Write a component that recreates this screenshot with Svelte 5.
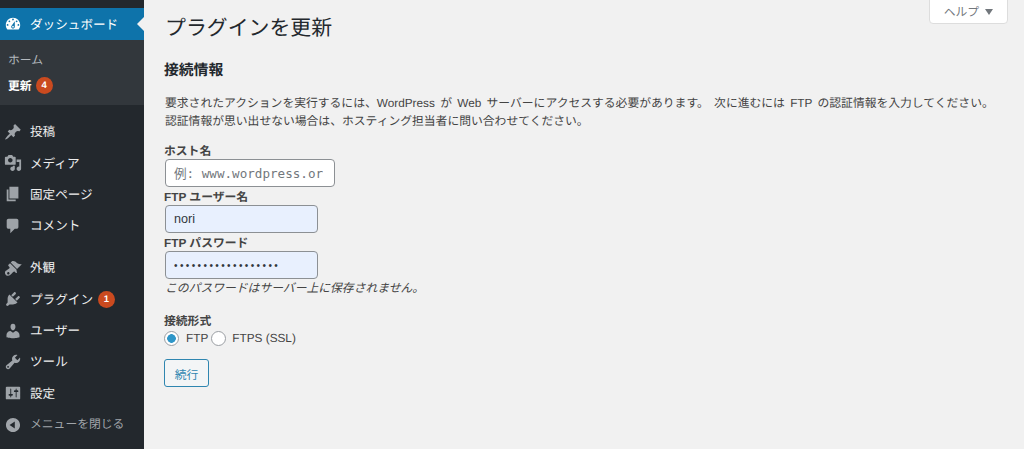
<script>
  const icons = {
    dashboard: 'M3.76 16h12.48c1.1-1.37 1.76-3.11 1.76-5 0-4.42-3.58-8-8-8s-8 3.58-8 8c0 1.89.66 3.63 1.76 5zM10 4c.55 0 1 .45 1 1s-.45 1-1 1-1-.45-1-1 .45-1 1-1zM6 6c.55 0 1 .45 1 1s-.45 1-1 1-1-.45-1-1 .45-1 1-1zm8 0c.55 0 1 .45 1 1s-.45 1-1 1-1-.45-1-1 .45-1 1-1zm-5.37 5.55L12 7v6c0 1.1-.9 2-2 2s-2-.9-2-2c0-.57.24-1.08.63-1.45zM4 10c.55 0 1 .45 1 1s-.45 1-1 1-1-.45-1-1 .45-1 1-1zm12 0c.55 0 1 .45 1 1s-.45 1-1 1-1-.45-1-1 .45-1 1-1zm-5 3c0-.55-.45-1-1-1s-1 .45-1 1 .45 1 1 1 1-.45 1-1z',
    pin: 'M10.44 3.02l1.82-1.82 6.36 6.35-1.83 1.82c-1.05-.68-2.48-.57-3.41.36l-.75.75c-.92.93-1.04 2.35-.35 3.41l-1.83 1.82-2.41-2.41-2.8 2.79c-.42.42-3.38 2.71-3.8 2.29s1.86-3.39 2.28-3.81l2.79-2.79L4.1 9.36l1.83-1.82c1.05.69 2.48.57 3.4-.36l.75-.75c.93-.92 1.05-2.35.36-3.41z',
    media: 'M13 11V4c0-.55-.45-1-1-1h-1.67L9 1H5L3.67 3H2c-.55 0-1 .45-1 1v7c0 .55.45 1 1 1h10c.55 0 1-.45 1-1zM7 4.5c1.38 0 2.5 1.12 2.5 2.5S8.38 9.5 7 9.5 4.5 8.38 4.5 7 5.62 4.5 7 4.5zM14 6h5v10.5c0 1.38-1.12 2.5-2.5 2.5S14 17.88 14 16.5s1.12-2.5 2.5-2.5c.17 0 .34.02.5.05V9h-3V6zm-4 8.05V13h2v3.5c0 1.38-1.12 2.5-2.5 2.5S7 17.88 7 16.5 8.12 14 9.5 14c.17 0 .34.02.5.05z',
    page: 'M6 15V2h10v13H6zm-1 1h8v2H3V5h2v11z',
    comment: 'M5 2h9c1.1 0 2 .9 2 2v7c0 1.1-.9 2-2 2h-2l-5 5v-5H5c-1.1 0-2-.9-2-2V4c0-1.1.9-2 2-2z',
    brush: 'M14.48 11.06L7.41 3.99l1.5-1.5c.5-.56 2.3-.47 3.51.32 1.21.8 1.43 1.28 2.91 2.1 1.18.64 2.45 1.26 4.45.85zm-.71.71L6.7 4.7 4.93 6.47c-.39.39-.39 1.02 0 1.41l1.06 1.06c.39.39.39 1.03 0 1.42-.6.6-1.43 1.11-2.21 1.69-.35.26-.7.53-1.01.84C1.43 13.23.99 14.3 1.1 15.6c.11 1.29 1.15 2.77 2.64 3.08 1.16.24 2.31-.26 3.08-.83.69-.52 1.2-1.13 1.84-1.77.46-.46.99-1.03 1.55-1.53.56-.49 1.12-.99 1.72-.39l1.06 1.06c.39.39 1.02.39 1.41 0zM5.79 16.91c-.54.54-1.42.54-1.96 0-.54-.54-.54-1.42 0-1.96.54-.54 1.42-.54 1.96 0 .54.54.54 1.42 0 1.96z',
    plugin: 'M13.11 4.36L9.87 7.6 8 5.73l3.24-3.24c.35-.34 1.05-.2 1.56.32.52.51.66 1.21.31 1.55zm-8 1.77l.91-1.12 9.01 9.01-1.19.84c-.71.71-2.63 1.16-3.82 1.16H6.14L4.9 17.26c-.59.59-1.54.59-2.12 0-.59-.58-.59-1.53 0-2.12l1.24-1.24v-3.88c0-1.13.4-3.19 1.09-3.89zm7.26 3.97l3.24-3.24c.34-.35 1.04-.21 1.55.31.52.51.66 1.21.31 1.55l-3.24 3.25z',
    user: 'M10 9.25c-2.27 0-2.73-3.44-2.73-3.44C7 4.02 7.82 2 9.97 2c2.16 0 2.98 2.02 2.71 3.81 0 0-.41 3.44-2.68 3.44zm0 2.57L12.72 10c2.39 0 4.52 2.33 4.52 4.53v2.49s-3.65 1.13-7.24 1.13c-3.65 0-7.24-1.13-7.24-1.13v-2.49c0-2.25 1.94-4.48 4.47-4.48z',
    wrench: 'M16.68 9.77c-1.34 1.34-3.3 1.67-4.95.99l-5.41 6.52c-.99.99-2.59.99-3.58 0s-.99-2.59 0-3.57l6.52-5.42c-.68-1.65-.35-3.61.99-4.95 1.28-1.28 3.12-1.62 4.72-1.06l-2.89 2.89 2.82 2.82 2.86-2.87c.53 1.58.18 3.39-1.08 4.65zM3.81 16.21c.4.39 1.04.39 1.43 0 .4-.4.4-1.04 0-1.43-.39-.4-1.03-.4-1.43 0-.39.39-.39 1.03 0 1.43z',
    settings: 'M18 16V4c0-.55-.45-1-1-1H3c-.55 0-1 .45-1 1v12c0 .55.45 1 1 1h14c.55 0 1-.45 1-1zM8 11h1c.55 0 1 .45 1 1s-.45 1-1 1H8v1.5c0 .28-.22.5-.5.5s-.5-.22-.5-.5V13H6c-.55 0-1-.45-1-1s.45-1 1-1h1V5.5c0-.28.22-.5.5-.5s.5.22.5.5V11zm5-2h-1c-.55 0-1-.45-1-1s.45-1 1-1h1V5.5c0-.28.22-.5.5-.5s.5.22.5.5V7h1c.55 0 1 .45 1 1s-.45 1-1 1h-1v5.5c0 .28-.22.5-.5.5s-.5-.22-.5-.5V9z',
    collapse: 'M10 2.16c4.33 0 7.84 3.51 7.84 7.84s-3.51 7.84-7.84 7.84S2.16 14.33 2.16 10 5.71 2.16 10 2.16zm2 11.72V6.12L6.18 9.97z'
  };

  const group1 = [
    { icon: 'pin', label: '投稿' },
    { icon: 'media', label: 'メディア' },
    { icon: 'page', label: '固定ページ' },
    { icon: 'comment', label: 'コメント' }
  ];
  const group2 = [
    { icon: 'brush', label: '外観' },
    { icon: 'plugin', label: 'プラグイン', badge: 1 },
    { icon: 'user', label: 'ユーザー' },
    { icon: 'wrench', label: 'ツール' },
    { icon: 'settings', label: '設定' }
  ];
</script>

{#snippet item(row)}
  <li class="item">
    <svg class="icon" viewBox="0 0 20 20"><path fill-rule="evenodd" d={icons[row.icon]} /></svg>
    <span>{row.label}</span>
    {#if row.badge}<b class="badge">{row.badge}</b>{/if}
  </li>
{/snippet}

<div class="page">
  <aside class="sidebar">
    <div class="current">
      <svg class="icon" viewBox="0 0 20 20"><path fill-rule="evenodd" d={icons.dashboard} /></svg>
      <span>ダッシュボード</span>
    </div>
    <ul class="submenu">
      <li>ホーム</li>
      <li class="active">更新 <b class="badge">4</b></li>
    </ul>
    <ul class="menu">
      {#each group1 as row}{@render item(row)}{/each}
    </ul>
    <ul class="menu second">
      {#each group2 as row}{@render item(row)}{/each}
      <li class="item closer">
        <svg class="icon" viewBox="0 0 20 20"><path fill-rule="evenodd" d={icons.collapse} /></svg>
        <span>メニューを閉じる</span>
      </li>
    </ul>
  </aside>

  <main class="content">
    <button class="help" type="button">ヘルプ <i class="caret"></i></button>
    <h1>プラグインを更新</h1>
    <h2>接続情報</h2>
    <p class="intro">要求されたアクションを実行するには、WordPress が Web サーバーにアクセスする必要があります。 次に進むには FTP の認証情報を入力してください。<br />認証情報が思い出せない場合は、ホスティング担当者に問い合わせてください。</p>

    <form class="form">
      <label for="hostname">ホスト名</label>
      <input id="hostname" class="host" type="text" placeholder="例: www.wordpress.org" />
      <label for="username">FTP ユーザー名</label>
      <input id="username" class="filled" type="text" value="nori" />
      <label for="password">FTP パスワード</label>
      <input id="password" class="filled secret" type="password" value="abcdefghijklmnopqr" />
      <em class="note">このパスワードはサーバー上に保存されません。</em>

      <div class="legend">接続形式</div>
      <div class="radios">
        <span class="radio on"></span><span class="radio-label">FTP</span>
        <span class="radio"></span><span class="radio-label last">FTPS (SSL)</span>
      </div>
      <button class="submit" type="button">続行</button>
    </form>
  </main>
</div>

<style>
  :global(body) {
    margin: 0;
    background: #f1f1f1;
  }

  .page {
    display: flex;
    height: 449px;
    overflow: hidden;
    font-family: "Liberation Sans", "Noto Sans CJK JP", sans-serif;
    font-size: 11.8px;
    text-rendering: geometricPrecision;
    color: #444;
  }

  ul {
    list-style: none;
    margin: 0;
    padding: 0;
  }

  .sidebar {
    flex: 0 0 144px;
    padding-top: 8px;
    background: #23282d;
    color: #eee;
    font-size: 12.6px;
  }

  .icon {
    flex: none;
    width: 18px;
    height: 18px;
    margin: 0 8px 0 4px;
    fill: #9ea3a8;
  }

  .current {
    position: relative;
    display: flex;
    align-items: center;
    height: 32px;
    background: #0e73aa;
    color: #fff;
  }

  .current span, .item span {
    margin-bottom: 2px;
  }

  .current .icon {
    fill: #fff;
  }

  .current::after {
    content: "";
    position: absolute;
    right: 0;
    top: 9px;
    border: 7px solid transparent;
    border-right-color: #f1f1f1;
    border-left-width: 0;
  }

  .submenu {
    height: 65px;
    box-sizing: border-box;
    padding-top: 6px;
    background: #32373c;
    color: #b4b9be;
    font-size: 11.8px;
  }

  .submenu li {
    display: flex;
    align-items: center;
    gap: 4px;
    height: 26px;
    padding-left: 8px;
  }

  .submenu .active {
    color: #fff;
    font-weight: 700;
  }

  .menu {
    padding-top: 11px;
  }

  .menu.second {
    padding-top: 10.5px;
  }

  .item {
    display: flex;
    align-items: center;
    height: 31.4px;
  }

  .closer {
    color: #a0a5aa;
    font-size: 11.8px;
  }

  .closer .icon {
    fill: #a0a5aa;
  }

  .badge {
    display: inline-block;
    width: 17px;
    height: 17px;
    border-radius: 50%;
    background: #ca4a1f;
    color: #fff;
    font-size: 9.5px;
    font-weight: 700;
    line-height: 17px;
    text-align: center;
  }

  .item .badge {
    margin-left: 5px;
  }

  .content {
    position: relative;
    flex: 1;
    min-width: 0;
    padding-left: 20px;
  }

  .help {
    position: absolute;
    top: -4px;
    right: 16px;
    width: 79px;
    height: 28px;
    padding: 0;
    border: 1px solid #ddd;
    border-radius: 0 0 4px 4px;
    background: #fff;
    color: #72777c;
    font: inherit;
  }

  .caret {
    display: inline-block;
    margin-left: 3px;
    vertical-align: 1px;
    border: 4px solid transparent;
    border-top: 6px solid #72777c;
    border-bottom-width: 0;
  }

  h1 {
    margin: 13px 0 0 1px;
    font-size: 20.9px;
    font-weight: 400;
    line-height: 32px;
    color: #23282d;
  }

  h2 {
    margin: 14px 0 0;
    font-size: 14.8px;
    line-height: 24px;
    color: #23282d;
  }

  .intro {
    margin: 11px 0 0 1px;
    line-height: 18px;
    word-spacing: 2px;
    white-space: nowrap;
  }

  .form {
    display: flex;
    flex-direction: column;
    align-items: flex-start;
    margin-top: 11px;
  }

  label, .legend {
    margin-bottom: -2px;
    font-weight: 700;
    line-height: 20px;
  }

  input {
    box-sizing: border-box;
    width: 153px;
    height: 28px;
    margin: 0 0 0 1px;
    padding: 0 8px;
    border: 1px solid #8c9094;
    border-radius: 4px;
    background: #fff;
    font-family: inherit;
    font-size: 12.6px;
    color: #32373c;
  }

  .host {
    width: 170px;
    padding-right: 11px;
    font-family: "DejaVu Sans Mono", "Noto Sans CJK JP", monospace;
  }

  .host::placeholder {
    color: #72777c;
  }

  .filled {
    background: #e8f0fe;
  }

  .secret {
    font-size: 10px;
    letter-spacing: 2.4px;
  }

  .note {
    margin-left: 1px;
    padding-top: 1px;
    line-height: 17px;
  }

  .legend {
    margin-top: 14px;
  }

  .radios {
    display: flex;
    align-items: center;
    height: 18px;
  }

  .radio {
    box-sizing: border-box;
    width: 15px;
    height: 15px;
    border: 1px solid #9a9ea3;
    border-radius: 50%;
    background: #fff;
  }

  .radio.on {
    background: radial-gradient(circle, #2f96c8 0 4px, #fff 4.6px);
  }

  .radio-label {
    margin: 0 3px 0 7px;
  }

  .radio-label.last {
    margin-left: 6px;
  }

  .submit {
    width: 45px;
    height: 28px;
    margin-top: 12px;
    padding: 0;
    border: 1px solid #2f86b0;
    border-radius: 3px;
    background: #f3f5f6;
    color: #2f86b0;
    font: inherit;
  }
</style>
